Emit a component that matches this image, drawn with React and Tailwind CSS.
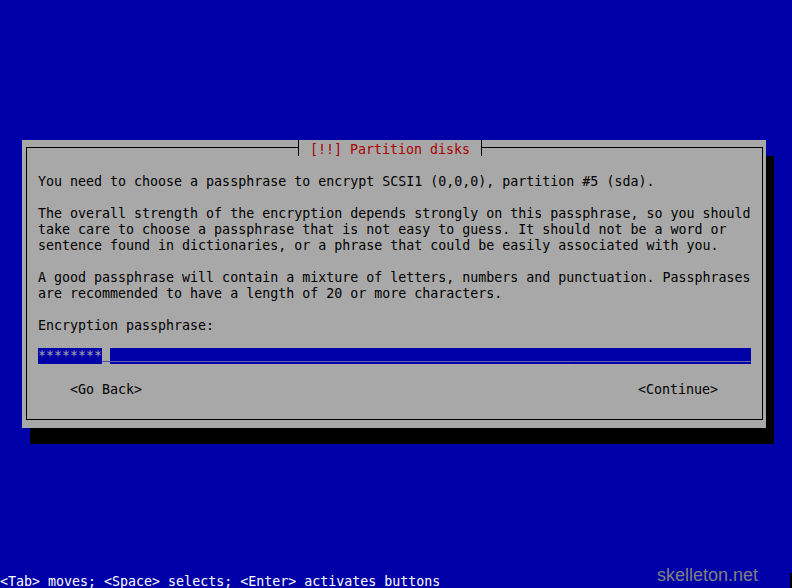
const BODY = [
  "You need to choose a passphrase to encrypt SCSI1 (0,0,0), partition #5 (sda).",
  "",
  "The overall strength of the encryption depends strongly on this passphrase, so you should",
  "take care to choose a passphrase that is not easy to guess. It should not be a word or",
  "sentence found in dictionaries, or a phrase that could be easily associated with you.",
  "",
  "A good passphrase will contain a mixture of letters, numbers and punctuation. Passphrases",
  "are recommended to have a length of 20 or more characters.",
  "",
  "Encryption passphrase:",
  "",
];

function Line({ children }) {
  return <div className="h-4 whitespace-pre leading-[19px]">{children}</div>;
}

export default function App() {
  return (
    <div className="flex h-[588px] w-[792px] flex-col overflow-hidden bg-[#0000a8] font-['DejaVu_Sans_Mono',monospace] text-[13.3px] text-black">
      {/* Dialog */}
      <div className="ml-[22px] mt-[140px] h-[288px] w-[744px] shrink-0 bg-[#a8a8a8] pb-[8px] pl-[4px] pr-[3px] pt-[7px] shadow-[8px_16px_0_0_#000]">
        <div className="relative h-full border border-black pl-[11px] pr-[12px] pt-[24px]">
          {/* Title */}
          <div className="absolute left-[271px] top-[-8px] flex h-4 bg-[#a8a8a8]">
            <div className="h-4 w-px bg-black" />
            <span className="mx-[3px] whitespace-pre leading-[19px] text-[#a80000]">
              {" [!!] Partition disks "}
            </span>
            <div className="h-4 w-px bg-black" />
          </div>

          {BODY.map((t, i) => (
            <Line key={i}>{t}</Line>
          ))}

          {/* Passphrase field */}
          <div className="flex h-4 whitespace-pre">
            <span className="h-4 bg-[#0000a8] leading-[16px] text-[#a8a8a8]">********</span>
            <span className="h-4 bg-[#a8a8a8] leading-[11px] text-[#0000a8]">_</span>
            <span className="h-4 flex-1 bg-[#0000a8] leading-[11px] text-[#a8a8a8]">
              {"_".repeat(80)}
            </span>
          </div>

          <Line />

          {/* Buttons */}
          <div className="flex h-4 whitespace-pre leading-[19px]">
            <span className="ml-[32px]">&lt;Go Back&gt;</span>
            <span className="ml-auto mr-[32px]">&lt;Continue&gt;</span>
          </div>
        </div>
      </div>

      {/* Footer */}
      <div className="mt-auto flex items-end">
        <span className="h-4 whitespace-pre leading-[19px] text-white">
          &lt;Tab&gt; moves; &lt;Space&gt; selects; &lt;Enter&gt; activates buttons
        </span>
        <span className="mb-[4px] ml-auto font-['Liberation_Sans',Arial,sans-serif] text-[18px] leading-[18px] text-[#808080]">
          skelleton.net
        </span>
        <div className="ml-[32px] h-[15px] w-[2px] bg-black" />
      </div>
    </div>
  );
}
